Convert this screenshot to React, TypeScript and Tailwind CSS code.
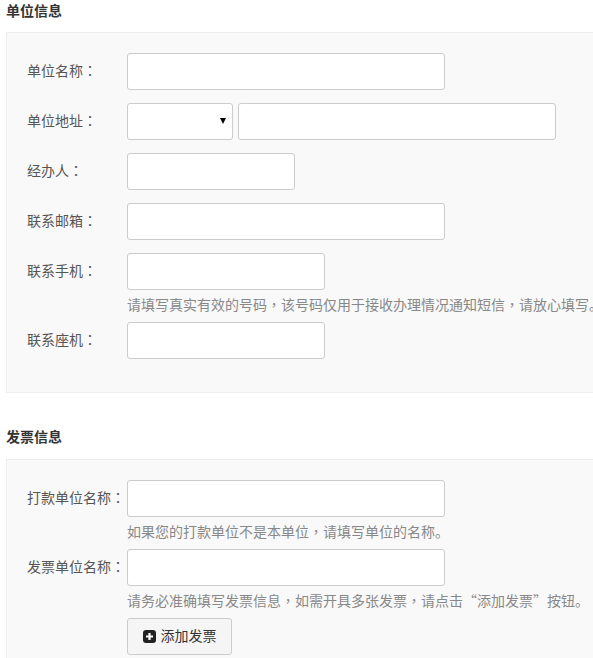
function Colon() {
  return <span className="font-['Noto_Sans_CJK_TC',sans-serif]">：</span>;
}

function Comma() {
  return <span className="font-['Noto_Sans_CJK_TC',sans-serif]">，</span>;
}

function Field({ label, width, help, pad = "mb-[13px]" }: { label: string; width: string; help?: React.ReactNode; pad?: string }) {
  return (
    <div className={pad}>
      <div className="flex items-center">
        <label className="w-[120px] pb-[2px] pl-[20px] whitespace-nowrap text-[14px] text-[#555]">{label}<Colon /></label>
        <input className={`${width} h-[37px] rounded-[3px] border border-[#ccc] bg-white`} />
      </div>
      {help && <p className="ml-[120px] mt-[4px] h-[21px] whitespace-nowrap text-[14px] leading-[20px] text-[#888]">{help}</p>}
    </div>
  );
}

export default function App() {
  return (
    <div className="h-[658px] w-[593px] overflow-hidden bg-white font-['Noto_Sans_CJK_SC','Liberation_Sans',sans-serif]">
      <h3 className="h-[32px] pl-[6px] text-[14px] font-bold leading-[20px] text-[#333]">单位信息</h3>
      <div className="ml-[6px] h-[361px] w-[640px] border border-[#eee] bg-[#f9f9f9] pt-[20px]">
        <Field label="单位名称" width="w-[318px]" />
        <div className="mb-[13px] flex items-center">
          <label className="w-[120px] pb-[2px] pl-[20px] whitespace-nowrap text-[14px] text-[#555]">单位地址<Colon /></label>
          <div className="relative h-[37px] w-[106px] rounded-[3px] border border-[#ccc] bg-white">
            <span className="absolute left-[92px] top-[14px] h-0 w-0 border-x-[3px] border-t-[6px] border-x-transparent border-t-black" />
          </div>
          <input className="ml-[5px] h-[37px] w-[318px] rounded-[3px] border border-[#ccc] bg-white" />
        </div>
        <Field label="经办人" width="w-[168px]" />
        <Field label="联系邮箱" width="w-[318px]" />
        <Field
          label="联系手机"
          width="w-[198px]"
          help={<>请填写真实有效的号码<Comma />该号码仅用于接收办理情况通知短信<Comma />请放心填写。</>}
          pad="mb-[7px]"
        />
        <Field label="联系座机" width="w-[198px]" />
      </div>
      <h3 className="h-[66px] pl-[6px] pt-[33px] text-[14px] font-bold leading-[20px] text-[#333]">发票信息</h3>
      <div className="ml-[6px] w-[640px] border border-[#eee] bg-[#f9f9f9] pt-[20px] pb-[20px]">
        <Field
          label="打款单位名称"
          width="w-[318px]"
          help={<>如果您的打款单位不是本单位<Comma />请填写单位的名称。</>}
          pad="mb-[7px]"
        />
        <Field
          label="发票单位名称"
          width="w-[318px]"
          help={<>请务必准确填写发票信息<Comma />如需开具多张发票<Comma />请点击“添加发票”按钮。</>}
          pad="mb-[7px]"
        />
        <button className="ml-[120px] flex h-[37px] w-[105px] items-center justify-center gap-[5px] rounded-[3px] border border-[#ccc] bg-[#f5f5f5] text-[14px] text-[#333]">
          <svg width="13" height="13" viewBox="0 0 13 13">
            <rect width="13" height="13" rx="3" fill="#222" />
            <path d="M6.5 3v7M3 6.5h7" stroke="#fff" strokeWidth="2.2" />
          </svg>
          <span className="pb-[2px]">添加发票</span>
        </button>
      </div>
    </div>
  );
}
